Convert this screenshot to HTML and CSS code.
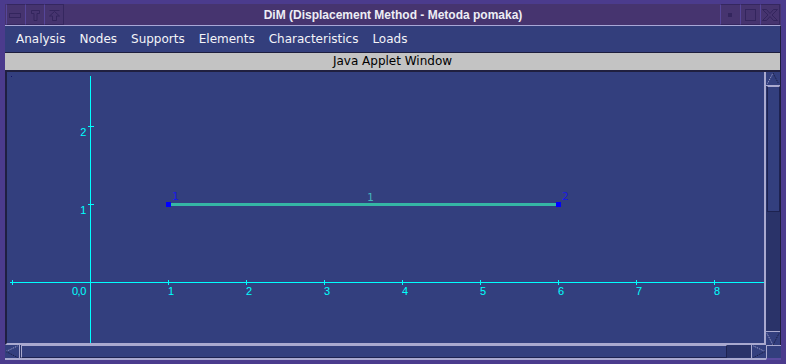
FILE: index.html
```html
<!DOCTYPE html>
<html>
<head>
<meta charset="utf-8">
<title>DiM</title>
<link rel="stylesheet" href="styles.css">
</head>
<body>
<div class="window">
  <div class="titlebar">
    <div class="tb-buttons tb-left">
      <span class="tb-btn">
        <svg width="18" height="19" viewBox="0 0 18 19"><rect x="2.5" y="8.5" width="11" height="4" class="ico"/></svg>
      </span>
      <span class="tb-btn">
        <svg width="18" height="19" viewBox="0 0 18 19"><path d="M5.5 5.5h8v3h-2.5v7h-3v-7h-2.5z" class="ico"/></svg>
      </span>
      <span class="tb-btn">
        <svg width="18" height="19" viewBox="0 0 18 19"><path d="M4.5 5.5h10M9.5 6.5l-5 4.5h3v4.5h4v-4.5h3z" class="ico"/></svg>
      </span>
    </div>
    <div class="title">DiM (Displacement Method - Metoda pomaka)</div>
    <div class="tb-buttons tb-right">
      <span class="tb-btn wide">
        <svg width="19" height="19" viewBox="0 0 19 19"><rect x="7.5" y="8.5" width="3" height="3" class="ico fill"/></svg>
      </span>
      <span class="tb-btn wide">
        <svg width="19" height="19" viewBox="0 0 19 19"><rect x="4.5" y="4.5" width="10" height="11" class="ico"/></svg>
      </span>
      <span class="tb-btn">
        <svg width="18" height="19" viewBox="0 0 18 19"><path d="M1.5 4.5h4l3.5 4 3.5-4h4l-5.5 5.5 5.5 5.5h-4l-3.5-4-3.5 4h-4l5.5-5.5z" class="ico"/></svg>
      </span>
    </div>
  </div>

  <div class="menubar">
    <span class="menu-item">Analysis</span>
    <span class="menu-item">Nodes</span>
    <span class="menu-item">Supports</span>
    <span class="menu-item">Elements</span>
    <span class="menu-item">Characteristics</span>
    <span class="menu-item">Loads</span>
  </div>

  <div class="appletbar">Java Applet Window</div>

  <div class="client">
    <div class="canvas-wrap">
      <svg class="plot" width="757" height="271" viewBox="0 0 757 271">
        <rect x="4" y="4" width="1" height="1" fill="#121266"/>
        <g class="axis">
          <line x1="3" y1="210.5" x2="757" y2="210.5"/>
          <line x1="83.5" y1="4" x2="83.5" y2="271"/>
          <line x1="5.5" y1="208" x2="5.5" y2="213"/>
          <line x1="161.5" y1="208" x2="161.5" y2="213"/>
          <line x1="239.5" y1="208" x2="239.5" y2="213"/>
          <line x1="317.5" y1="208" x2="317.5" y2="213"/>
          <line x1="395.5" y1="208" x2="395.5" y2="213"/>
          <line x1="473.5" y1="208" x2="473.5" y2="213"/>
          <line x1="551.5" y1="208" x2="551.5" y2="213"/>
          <line x1="629.5" y1="208" x2="629.5" y2="213"/>
          <line x1="707.5" y1="208" x2="707.5" y2="213"/>
          <line x1="81" y1="132.5" x2="87" y2="132.5"/>
          <line x1="81" y1="54.5" x2="87" y2="54.5"/>
        </g>
        <g class="axis-label">
          <text x="79" y="223" text-anchor="end">0,0</text>
          <text x="161" y="223">1</text>
          <text x="239" y="223">2</text>
          <text x="317" y="223">3</text>
          <text x="395" y="223">4</text>
          <text x="473" y="223">5</text>
          <text x="551" y="223">6</text>
          <text x="629" y="223">7</text>
          <text x="707" y="223">8</text>
          <text x="79" y="142" text-anchor="end">1</text>
          <text x="79" y="64" text-anchor="end">2</text>
        </g>
        <line class="element" x1="164" y1="132.5" x2="549" y2="132.5"/>
        <text class="element-label" x="360" y="129">1</text>
        <rect class="node" x="159" y="130" width="5" height="5"/>
        <rect class="node" x="549" y="130" width="5" height="5"/>
        <text class="node-label" x="165" y="128">1</text>
        <text class="node-label" x="555" y="128">2</text>
      </svg>
    </div>

    <div class="vscroll">
      <div class="arrow arrow-v">
        <svg width="14" height="14" viewBox="0 0 14 14"><path d="M1.5 11.5L7 1" class="dl"/><path d="M7 1l5.5 10.5" class="dd"/></svg>
      </div>
      <div class="vthumb"></div>
      <div class="vtrack"></div>
      <div class="arrow arrow-v down">
        <svg width="14" height="14" viewBox="0 0 14 14"><path d="M1 1.5L7 13" class="dl"/><path d="M13 1.5L7 13" class="dd"/></svg>
      </div>
    </div>

    <div class="hscroll">
      <div class="arrow arrow-h">
        <svg width="14" height="13" viewBox="0 0 14 13"><path d="M1 6.5L12.5 1" class="dl"/><path d="M1 6.5l11.5 6" class="dd"/></svg>
      </div>
      <div class="hthumb"></div>
      <div class="htrack"></div>
      <div class="arrow arrow-h right">
        <svg width="14" height="13" viewBox="0 0 14 13"><path d="M1.5 1L13 6.5" class="dl"/><path d="M1.5 12.5L13 6.5" class="dd"/></svg>
      </div>
    </div>

    <div class="corner"></div>
  </div>
</div>
</body>
</html>
```

FILE: styles.css
```css
html, body {
  margin: 0;
  padding: 0;
  background: #4b3b8d;
}

.window {
  width: 786px;
  height: 364px;
  box-sizing: border-box;
  padding: 4px 5px 5px 5px;
  background: #4b3b8d;
  display: flex;
  flex-direction: column;
  font-family: "DejaVu Sans", sans-serif;
  overflow: hidden;
}

/* ---------- title bar ---------- */
.titlebar {
  height: 21px;
  flex: none;
  background: #46346f;
  display: grid;
  grid-template-columns: 1fr auto 1fr;
  align-items: start;
}

.tb-buttons {
  display: flex;
}

.tb-left {
  justify-self: start;
  margin-left: 1px;
}

.tb-right {
  justify-self: end;
  margin-right: 1px;
}

.tb-btn {
  width: 18px;
  height: 19px;
  border: 1px solid #35275f;
  border-left-color: #56469a;
  border-right: none;
  display: block;
}

.tb-btn:last-child {
  border-right: 1px solid #35275f;
}

.tb-btn.wide {
  width: 19px;
}

.tb-btn svg {
  display: block;
}

.ico {
  fill: none;
  stroke: #33255d;
  stroke-width: 1;
}

.ico.fill {
  fill: #33255d;
}

.title {
  font-family: "Liberation Sans", Arial, sans-serif;
  font-weight: bold;
  font-size: 12px;
  line-height: 21px;
  padding-top: 1px;
  color: #ededf5;
  white-space: nowrap;
}

/* ---------- menu ---------- */
.menubar {
  height: 25px;
  flex: none;
  background: #333e7c;
  border-top: 1px solid #a9a7d6;
  border-bottom: 1px solid #1d1d3d;
  border-right: 1px solid #1d1d3d;
  display: flex;
  padding-left: 4px;
  padding-top: 1px;
  box-sizing: content-box;
  line-height: 24px;
}

.menu-item {
  font-size: 12px;
  color: #f4f4f8;
  padding: 0 7px;
  white-space: nowrap;
}

/* ---------- applet banner ---------- */
.appletbar {
  height: 17px;
  flex: none;
  line-height: 17px;
  background: #c3c3c3;
  color: #000;
  text-align: center;
  font-size: 12px;
  border-right: 1px solid #1d1d3d;
  border-bottom: 2px solid #20203f;
}

/* ---------- client area ---------- */
.client {
  display: grid;
  grid-template-columns: 761px 15px;
  grid-template-rows: 273px 15px;
}

.canvas-wrap {
  background: #333f7e;
  border-left: 2px solid #1f1f42;
  border-right: 2px solid #a9a9cf;
  border-bottom: 2px solid #a9a9cf;
}

.plot {
  display: block;
}

.axis line {
  stroke: #00ffff;
  stroke-width: 1;
}

.axis-label text {
  font-family: "Liberation Sans", Arial, sans-serif;
  font-size: 11px;
  letter-spacing: -0.4px;
  fill: #00ffff;
}

.element {
  stroke: #35b6a5;
  stroke-width: 3;
}

.element-label {
  font-family: "DejaVu Sans Mono", monospace;
  font-size: 11px;
  fill: #43b3bb;
}

.node {
  fill: #0000ff;
}

.node-label {
  font-family: "DejaVu Sans Mono", monospace;
  font-size: 11px;
  fill: #1818e6;
}

/* ---------- scrollbars ---------- */
.vscroll {
  display: flex;
  flex-direction: column;
  background: #2a3369;
  border-right: 1px solid #1d1d3d;
}

.arrow {
  flex: none;
  background: #333f7e;
}

.arrow svg {
  display: block;
}

.arrow-v {
  height: 13px;
  border-bottom: 1px solid #a9a9cf;
}

.arrow-v.down {
  border-bottom: none;
  border-top: 1px solid #a9a9cf;
}

.vthumb {
  flex: none;
  height: 124px;
  background: #333f7e;
  border: 1px solid #1d2250;
  border-top: 1px solid #a9a9cf;
  margin-left: 1px;
}

.vtrack {
  flex: 1;
}

.hscroll {
  display: flex;
  background: #2a3369;
  border-bottom: 2px solid #a9a9cf;
}

.arrow-h {
  width: 14px;
  border-right: 1px solid #a9a9cf;
}

.arrow-h.right {
  border-right: none;
  border-left: 1px solid #a9a9cf;
}

.hthumb {
  flex: none;
  width: 704px;
  margin-left: 1px;
  background: #333f7e;
  border-top: 1px solid #a9a9cf;
  border-left: 1px solid #a9a9cf;
  border-right: 1px solid #1d2250;
  border-bottom: 1px solid #1d2250;
}

.htrack {
  flex: 1;
}

.dl {
  fill: none;
  stroke: #a9a9d2;
  stroke-dasharray: 1 1;
}

.dd {
  fill: none;
  stroke: #15183a;
  stroke-dasharray: 1 1;
}

.corner {
  background: #333f7e;
  border-left: 1px solid #a9a9cf;
  border-top: 1px solid #a9a9cf;
  border-bottom: 2px solid #5a4aa0;
}
```
